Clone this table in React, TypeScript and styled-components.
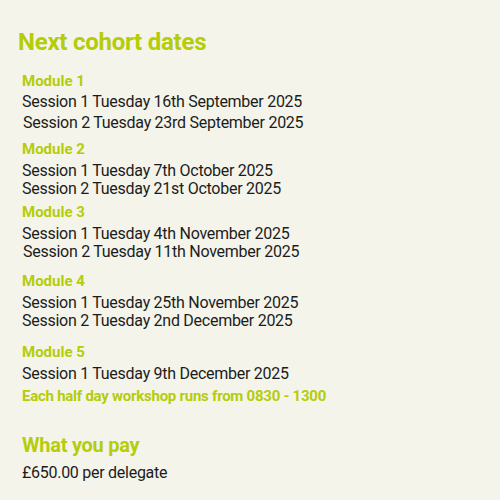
import React from "react";
import styled, { createGlobalStyle } from "styled-components";

const Global = createGlobalStyle`
  html, body { margin: 0; padding: 0; background: #f4f4ea; }
  body { font-family: Roboto, "Liberation Sans", sans-serif; }
`;

const Page = styled.main`
  width: 500px;
  height: 500px;
  box-sizing: border-box;
  padding: 28px 0 0 18px;
  background: #f4f4ea;
  overflow: hidden;
`;

const Title = styled.h2<{ $mt?: number }>`
  margin: ${(p) => p.$mt ?? 0}px 0 0;
  font-size: 24px;
  line-height: 28px;
  font-weight: 700;
  letter-spacing: -0.25px;
  color: #b4cc0a;
`;

const List = styled.div`
  display: flex;
  flex-direction: column;
  padding-left: 4px;
`;

const ModuleHead = styled.h3<{ $mt: number }>`
  margin: ${(p) => p.$mt}px 0 0;
  font-size: 15px;
  line-height: 18px;
  font-weight: 700;
  color: #b4cc0a;
`;

const Session = styled.p<{ $mt: number; $dx?: number }>`
  margin: ${(p) => p.$mt}px 0 0 ${(p) => p.$dx ?? 0}px;
  font-size: 16px;
  line-height: 18px;
  letter-spacing: -0.27px;
  color: #1c1c1c;
`;

const Note = styled.p<{ $mt: number }>`
  margin: ${(p) => p.$mt}px 0 0;
  font-size: 15px;
  line-height: 18px;
  font-weight: 700;
  letter-spacing: -0.25px;
  color: #b4cc0a;
`;

const SubTitle = styled.h2<{ $mt: number }>`
  margin: ${(p) => p.$mt}px 0 0;
  font-size: 20px;
  line-height: 24px;
  font-weight: 700;
  letter-spacing: -0.25px;
  color: #b4cc0a;
`;

type ModuleData = {
  name: string;
  mt: number;
  sessions: { text: string; mt: number; dx?: number }[];
};

const modules: ModuleData[] = [
  {
    name: "Module 1",
    mt: 16,
    sessions: [
      { text: "Session 1 Tuesday 16th September 2025", mt: 3 },
      { text: "Session 2 Tuesday 23rd September 2025", mt: 3, dx: 1 },
    ],
  },
  {
    name: "Module 2",
    mt: 8,
    sessions: [
      { text: "Session 1 Tuesday 7th October 2025", mt: 4 },
      { text: "Session 2 Tuesday 21st October 2025", mt: 0 },
    ],
  },
  {
    name: "Module 3",
    mt: 5,
    sessions: [
      { text: "Session 1 Tuesday 4th November 2025", mt: 4 },
      { text: "Session 2 Tuesday 11th November 2025", mt: 0, dx: 1 },
    ],
  },
  {
    name: "Module 4",
    mt: 11,
    sessions: [
      { text: "Session 1 Tuesday 25th November 2025", mt: 4 },
      { text: "Session 2 Tuesday 2nd December 2025", mt: 0 },
    ],
  },
  {
    name: "Module 5",
    mt: 13,
    sessions: [{ text: "Session 1 Tuesday 9th December 2025", mt: 4 }],
  },
];

export default function App() {
  return (
    <>
      <Global />
      <Page>
        <Title>Next cohort dates</Title>
        <List>
          {modules.map((m) => (
            <React.Fragment key={m.name}>
              <ModuleHead $mt={m.mt}>{m.name}</ModuleHead>
              {m.sessions.map((s) => (
                <Session key={s.text} $mt={s.mt} $dx={s.dx}>
                  {s.text}
                </Session>
              ))}
            </React.Fragment>
          ))}
          <Note $mt={4}>Each half day workshop runs from 0830 - 1300</Note>
          <SubTitle $mt={28}>What you pay</SubTitle>
          <Session $mt={7}>£650.00 per delegate</Session>
        </List>
      </Page>
    </>
  );
}
